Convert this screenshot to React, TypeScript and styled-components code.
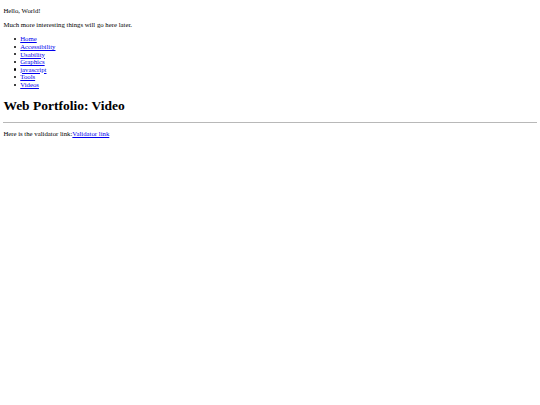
import React from 'react'
import styled, { createGlobalStyle } from 'styled-components'

// the reference is a 1280px-wide page shrunk to 540px, so every default is scaled by this
const s = (px: number) => `${(px * 540) / 1280}px`

const GlobalStyle = createGlobalStyle`
  html, body {
    margin: 0;
    padding: 0;
    background: #fff;
  }
`

// margin (not padding) so it collapses with the first paragraph, like body's default margin
const Page = styled.div`
  margin: ${s(8)};
  font-family: "Liberation Serif", "Times New Roman", serif;
  font-size: ${s(16)};
  line-height: 7.6px;
  color: #000;
`

const Para = styled.p`
  margin: ${s(16)} 0;
`

const NavList = styled.ul`
  margin: ${s(16)} 0;
  padding-left: ${s(40)};
  list-style: none;
`

// the browser's own disc sits too close at this size, so draw it
const NavItem = styled.li`
  &::before {
    content: '';
    display: inline-block;
    width: 2.2px;
    height: 2.2px;
    margin: 0 4.2px 0 -6.4px;
    border-radius: 50%;
    background: #000;
    vertical-align: 1.3px;
  }
`

const Link = styled.a`
  color: #0000ee;
  text-decoration: underline;
`

const Title = styled.h1`
  font-size: ${s(32)};
  line-height: 15.5px;
  font-weight: bold;
  margin: ${s(21.44)} 0;
`

const Rule = styled.hr`
  margin: ${s(8)} 0;
  border: none;
  border-top: 1px solid #b8b8b8;
  height: 0;
`

const pages = ['Home', 'Accessibility', 'Usability', 'Graphics', 'javascript', 'Tools', 'Videos']

export default function App () {
  return (
    <>
      <GlobalStyle />
      <Page>
        <Para>Hello, World!</Para>
        <Para>Much more interesting things will go here later.</Para>
        <NavList>
          {pages.map(name => (
            <NavItem key={name}>
              <Link href="#">{name}</Link>
            </NavItem>
          ))}
        </NavList>
        <Title>Web Portfolio: Video</Title>
        <Rule />
        <Para>Here is the validator link:<Link href="#">Validator link</Link></Para>
      </Page>
    </>
  )
}
